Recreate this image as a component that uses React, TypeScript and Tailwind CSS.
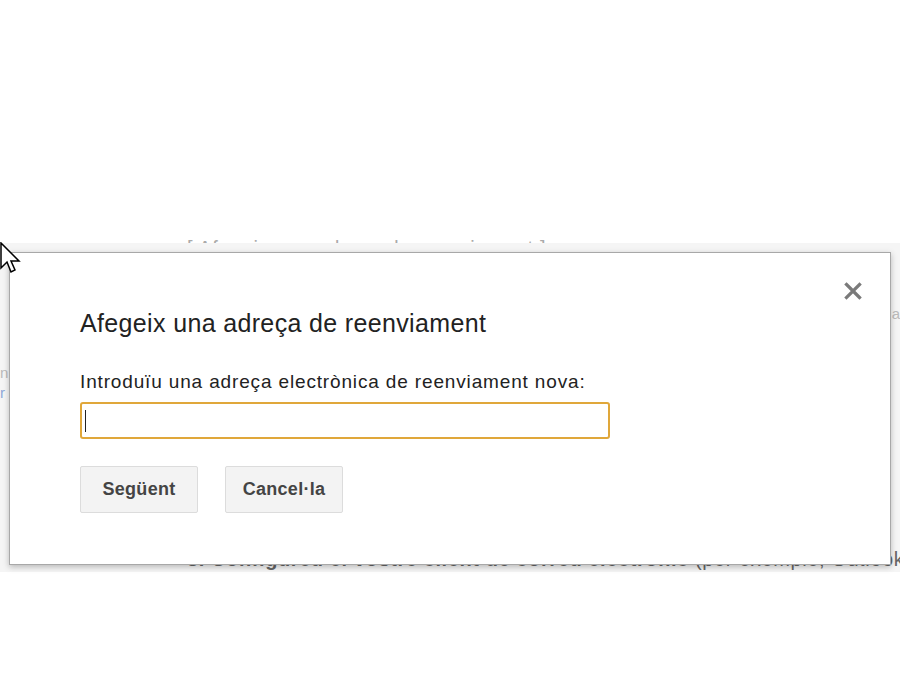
import React from "react";

export default function App() {
  return (
    <div className="w-[900px] h-[700px] bg-white relative overflow-hidden flex flex-col" style={{ fontFamily: '"Liberation Sans", Arial, sans-serif' }}>
      <div className="h-[243px] shrink-0 flex flex-col justify-end relative z-0">
        <div className="pl-[187px] -mb-[17px] text-[20px] leading-[24px] text-[#aaa] tracking-[0.6px] whitespace-nowrap">[ Afegeix una adreça de reenviament ]</div>
      </div>
      <div className="relative h-[329px] shrink-0 bg-[#f5f5f5] flex flex-col">
        <div className="h-[62px]" />
        <div className="flex justify-between text-[15px] leading-[18px]">
          <span className="text-[#bbb]" />
          <span className="text-[#bbb]">a</span>
        </div>
        <div className="h-[40px]" />
        <div className="text-[15px] leading-[20px] text-[#bbb]">n</div>
        <div className="text-[15px] leading-[20px] text-[#8fa8d8]">r</div>
        <div className="flex-1" />
        <div className="pl-[187px] pb-[1px] text-[20px] leading-[24px] text-[#666] whitespace-nowrap tracking-[0.6px]">
          <span className="font-bold">3. Configureu el vostre client de correu electrònic</span> (per exemple, Outlook)
        </div>

        <div className="absolute left-[9px] top-[9px] w-[882px] h-[313px] bg-white border border-[#a8a8a8] shadow-[0_2px_6px_rgba(0,0,0,0.25)] z-10 flex flex-col">
          <div className="flex justify-end pt-[28px] pr-[27px]">
            <svg width="20" height="20" viewBox="0 0 20 20">
              <path d="M3.5 3.5 L16.5 16.5 M16.5 3.5 L3.5 16.5" stroke="#7a7a7a" strokeWidth="3.2" strokeLinecap="square" />
            </svg>
          </div>
          <div className="pl-[70px] pt-[7px] flex flex-col items-start">
            <div className="text-[25px] leading-[30px] text-[#222] tracking-[0.35px]">Afegeix una adreça de reenviament</div>
            <div className="mt-[33px] text-[19px] leading-[22px] text-[#222] tracking-[0.85px]">Introduïu una adreça electrònica de reenviament nova:</div>
            <div className="mt-[9px] w-[530px] h-[37px] border-2 border-[#e0a73a] rounded-[3px] flex items-center pl-[3px]">
              <div className="w-[1px] h-[22px] bg-[#222]" />
            </div>
            <div className="mt-[27px] flex gap-[27px]">
              <button className="w-[118px] h-[47px] bg-[#f3f3f3] border border-[#dcdcdc] rounded-[2px] text-[18px] font-bold text-[#444] tracking-[0.3px]">Següent</button>
              <button className="w-[118px] h-[47px] bg-[#f3f3f3] border border-[#dcdcdc] rounded-[2px] text-[18px] font-bold text-[#444] tracking-[0.3px]">Cancel·la</button>
            </div>
          </div>
        </div>

        <svg className="absolute left-0 -top-[1px] z-20" width="24" height="36" viewBox="0 0 24 36">
          <path d="M1 1 L1 26 L7 20 L11 30 L15 28 L11 19 L19 19 Z" fill="white" stroke="black" strokeWidth="1.5" />
        </svg>
      </div>
      <div className="flex-1" />
    </div>
  );
}
